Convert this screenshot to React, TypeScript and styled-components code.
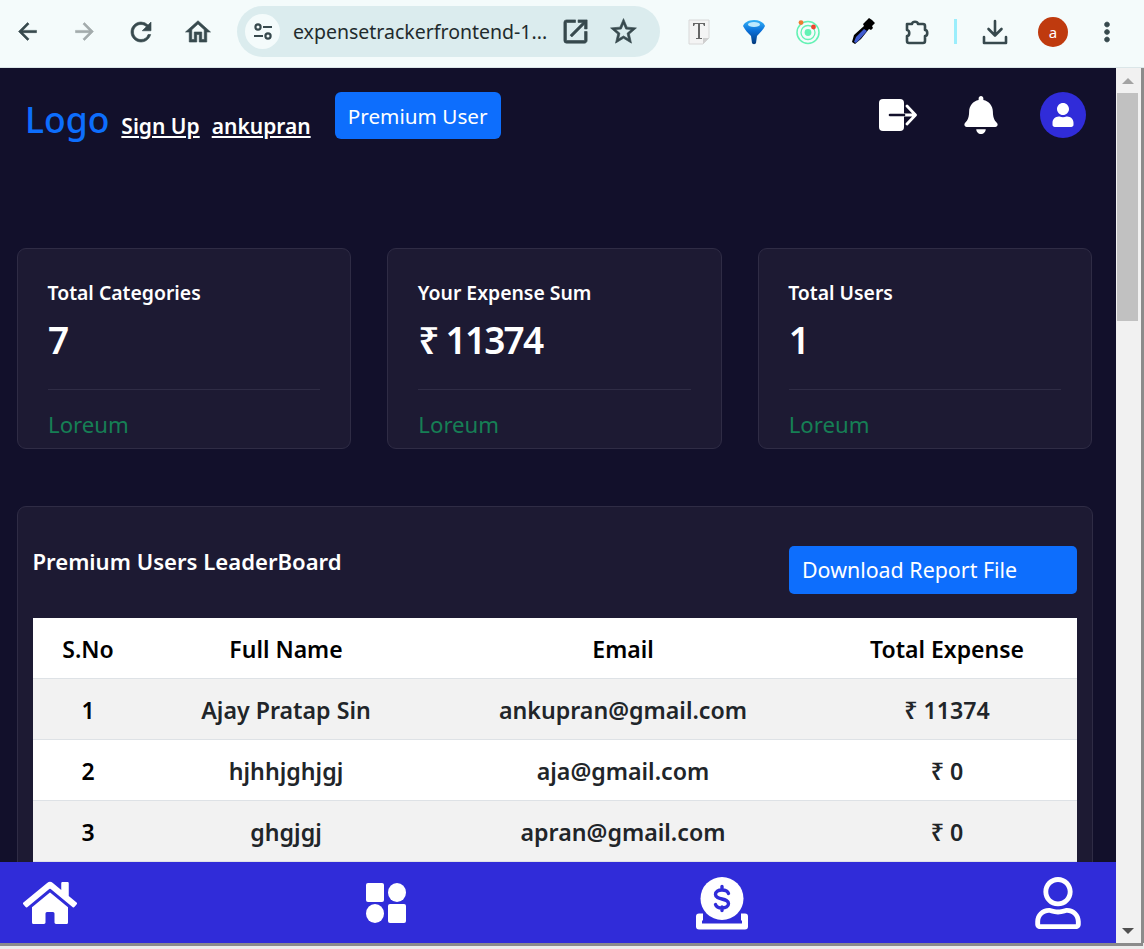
import React from "react";
import styled, { createGlobalStyle } from "styled-components";
import { FaHome, FaBell, FaUser, FaRegUser } from "react-icons/fa";
import { MdArrowBack, MdArrowForward, MdRefresh, MdOutlineHome, MdOpenInNew, MdStarBorder, MdMoreVert } from "react-icons/md";

const Global = createGlobalStyle`
  html, body { margin: 0; padding: 0; height: 949px; overflow: hidden; background: #ececec; }
  * { box-sizing: border-box; }
  body { font-family: "Noto Sans", "Open Sans", sans-serif; }
`;

const Shell = styled.div`
  width: 1144px;
  height: 949px;
  display: flex;
  flex-direction: column;
  background: #ececec;
`;
const Toolbar = styled.header`
  height: 68px;
  flex: none;
  display: flex;
  align-items: center;
  padding: 0 0 4px 9px;
  background: #f4fbfb;
  border-bottom: 1px solid #dbe6e8;
`;
const ToolGroup = styled.div<{ $gap: number }>`
  display: flex;
  align-items: center;
  gap: ${(p) => p.$gap}px;
`;
const ToolButton = styled.span<{ $color?: string; $size?: number }>`
  width: 36px;
  height: 36px;
  flex: none;
  display: flex;
  align-items: center;
  justify-content: center;
  color: ${(p) => p.$color ?? "#37494d"};
  font-size: ${(p) => p.$size ?? 29}px;
`;
const GlyphButton = styled(ToolButton)`
  svg path:not([fill="none"]) { stroke-width: 0.5px; }
`;
const Omnibox = styled.div`
  width: 423px;
  height: 51px;
  margin-left: 21px;
  flex: none;
  display: flex;
  align-items: center;
  padding: 0 17px 0 8px;
  border-radius: 26px;
  background: #dbecee;
`;
const TuneBadge = styled.span`
  width: 35px;
  height: 35px;
  flex: none;
  display: flex;
  align-items: center;
  justify-content: center;
  border-radius: 50%;
  background: #f4fbfb;
`;
const Url = styled.span`
  margin-left: 13px;
  width: 255px;
  flex: none;
  font-size: 19.5px;
  color: #1f2b2d;
  white-space: nowrap;
`;
const OmniActions = styled.div`
  margin-left: 9px;
  display: flex;
  align-items: center;
  gap: 12px;
`;
const Extensions = styled(ToolGroup)`
  margin-left: 21px;
`;
const Separator = styled.span`
  width: 3px;
  height: 25px;
  margin: 0 20px 0 19px;
  flex: none;
  background: #9beefc;
`;
const ProfileDot = styled.span`
  width: 30px;
  height: 30px;
  margin: 0 21px 0 25px;
  flex: none;
  display: flex;
  align-items: center;
  justify-content: center;
  border-radius: 50%;
  background: #bf3a0e;
  color: #fff;
  font-size: 15px;
`;

const Viewport = styled.div`
  height: 875px;
  flex: none;
  display: flex;
`;
const Page = styled.main`
  position: relative;
  width: 1116px;
  flex: none;
  overflow: hidden;
  padding: 0 23px 0 17px;
  background: #12102b;
`;
const Scrollbar = styled.div`
  width: 25px;
  flex: none;
  display: flex;
  flex-direction: column;
  align-items: center;
  background: #f1f1f1;
  padding: 0 3px 0 1px;
`;
const ArrowSlot = styled.div`
  height: 25px;
  width: 100%;
  flex: none;
  display: flex;
  align-items: center;
  justify-content: center;
`;
const ArrowUp = styled.span`
  width: 0;
  height: 0;
  border-left: 6px solid transparent;
  border-right: 6px solid transparent;
  border-bottom: 6px solid #a3a3a3;
`;
const ArrowDown = styled.span`
  width: 0;
  height: 0;
  border-left: 6px solid transparent;
  border-right: 6px solid transparent;
  border-top: 6px solid #505050;
`;
const Thumb = styled.div`
  width: 21px;
  height: 228px;
  flex: none;
  background: #c1c1c1;
`;
const ScrollSpace = styled.div`
  flex: 1;
`;
const FrameEdge = styled.div`
  width: 3px;
  flex: none;
  background: #8b8b8b;
`;
const BottomEdge = styled.div`
  height: 3px;
  width: 1143px;
  flex: none;
  background: #8b8b8b;
`;

const Header = styled.div`
  height: 180px;
  margin-left: -17px;
  padding: 24px 7px 0 25px;
  display: flex;
  align-items: flex-start;
`;
const Logo = styled.span`
  margin-top: 4px;
  font-size: 35.5px;
  line-height: 46px;
  font-weight: 500;
  color: #0d6efd;
`;
const HeaderLink = styled.a`
  margin: 14px 0 0 12px;
  font-size: 21px;
  line-height: 40px;
  font-weight: 600;
  color: #fff;
  text-decoration: underline;
`;
const PremiumButton = styled.button`
  height: 47px;
  width: 166px;
  margin-left: 24px;
  padding: 0;
  border: 0;
  border-radius: 6px;
  background: #0d6efd;
  color: #fff;
  font: inherit;
  font-size: 20.7px;
`;
const HeaderIcons = styled.div`
  margin-left: auto;
  display: flex;
  align-items: center;
  gap: 40px;
  height: 46px;
`;
const BellIcon = styled(FaBell)`
  margin-left: 5px;
  color: #fff;
  font-size: 38px;
`;
const Avatar = styled.span`
  width: 46px;
  height: 46px;
  display: flex;
  align-items: center;
  justify-content: center;
  border-radius: 50%;
  background: #302cd9;
  color: #fff;
  font-size: 24px;
`;

const Cards = styled.section`
  display: grid;
  grid-template-columns: repeat(3, 1fr);
  gap: 36px;
  margin-right: 1px;
`;
const Card = styled.article`
  height: 201px;
  padding: 29px 30px 0;
  border: 1px solid #2f2c45;
  border-radius: 9px;
  background: #1d1a33;
`;
const CardTitle = styled.h3`
  margin: 0 0 0 -0.5px;
  font-size: 19.4px;
  line-height: 30px;
  font-weight: 600;
  color: #fff;
`;
const CardValue = styled.div`
  margin-top: 2px;
  height: 62px;
  font-size: 37px;
  line-height: 60px;
  font-weight: 600;
  letter-spacing: -1.8px;
  color: #fff;
`;
const CardRule = styled.hr`
  margin: 17px 0 0;
  border: 0;
  border-top: 1px solid #2f2c45;
`;
const CardFoot = styled.div`
  margin-top: 18px;
  font-size: 22.2px;
  line-height: 34px;
  color: #167f55;
`;

const Panel = styled.section`
  margin-top: 57px;
  padding: 39px 15px 30px;
  border: 1px solid #2f2c45;
  border-radius: 9px;
  background: #1d1a33;
`;
const PanelHead = styled.div`
  display: flex;
  justify-content: space-between;
  align-items: flex-start;
  margin-bottom: 24px;
`;
const PanelTitle = styled.h2`
  margin: 0 0 0 -0.5px;
  font-size: 22.1px;
  line-height: 30px;
  font-weight: 600;
  color: #fff;
`;
const DownloadButton = styled.button`
  width: 288px;
  height: 48px;
  padding: 0 13px 2px;
  border: 0;
  border-radius: 5px;
  background: #0d6efd;
  color: #fff;
  font: inherit;
  font-size: 21.4px;
  text-align: left;
`;
const Table = styled.table`
  width: 1044px;
  table-layout: fixed;
  border-collapse: collapse;
  background: #fff;
`;
const Col = styled.col<{ $w: number }>`
  width: ${(p) => p.$w}px;
`;
const Row = styled.tr<{ $striped?: boolean; $head?: boolean }>`
  height: ${(p) => (p.$head ? 60 : 61)}px;
  background: ${(p) => (p.$striped ? "#f2f2f2" : "#fff")};
  border-bottom: 1px solid #dee2e6;
`;
const Th = styled.th`
  font-size: 23px;
  font-weight: 600;
  color: #000;
  text-align: center;
  padding: 2px 0 0;
`;
const Td = styled.td`
  font-size: 23.2px;
  font-weight: 600;
  color: #212529;
  text-align: center;
  padding: 2px 0 0;
`;

const BottomNav = styled.nav`
  position: absolute;
  left: 0;
  right: 0;
  bottom: 0;
  height: 81px;
  padding: 0 31px 0 23px;
  display: flex;
  justify-content: space-between;
  align-items: center;
  background: #302cd9;
  color: #fff;
`;
const NavItem = styled.a`
  width: 54px;
  height: 54px;
  display: flex;
  align-items: center;
  justify-content: center;
  color: #fff;
`;

const rows = [
  ["1", "Ajay Pratap Sin", "ankupran@gmail.com", "₹ 11374"],
  ["2", "hjhhjghjgj", "aja@gmail.com", "₹ 0"],
  ["3", "ghgjgj", "apran@gmail.com", "₹ 0"],
];
const cards = [
  ["Total Categories", "7"],
  ["Your Expense Sum", "₹ 11374"],
  ["Total Users", "1"],
];

const TuneIcon = () => (
  <svg width="22" height="22" viewBox="0 0 22 22" fill="none" stroke="#37494d" strokeWidth="2.2">
    <circle cx="6" cy="6" r="2.6" />
    <path d="M11 6h9M2 15h9" />
    <circle cx="16" cy="15" r="2.6" />
  </svg>
);
const TextFileIcon = () => (
  <svg width="22" height="26" viewBox="0 0 22 26">
    <path d="M1 1h20v18l-6 6H1z" fill="#f4f4f4" stroke="#d8d8d8" />
    <path d="M15 25v-6h6z" fill="#cfcfcf" />
    <path d="M5 4h12v3h-1l-1-2h-3v14h2v1H8v-1h2V5H7L6 7H5z" fill="#666" />
  </svg>
);
const FunnelIcon = () => (
  <svg width="24" height="26" viewBox="0 0 24 26">
    <defs>
      <linearGradient id="fn" x1="0" y1="0" x2="0" y2="1">
        <stop offset="0" stopColor="#35b4f8" />
        <stop offset="0.45" stopColor="#0a6fd8" />
        <stop offset="1" stopColor="#033a7c" />
      </linearGradient>
    </defs>
    <path d="M1 7c1-3 5-6 11-6s10 3 11 6c-2 4-5 7-8 10l-1 7c-.5 1.500-3.500 1.500-4 0l-1-7C6 14 3 11 1 7z" fill="url(#fn)" />
    <ellipse cx="12" cy="5.500" rx="6" ry="2.500" fill="#bdeafe" />
  </svg>
);
const OrbitIcon = () => (
  <svg width="26" height="26" viewBox="0 0 26 26" fill="none">
    <circle cx="13" cy="13.5" r="11" stroke="#63f2b4" strokeWidth="1.5" />
    <circle cx="13" cy="13.5" r="7" stroke="#63f2b4" strokeWidth="1.3" />
    <circle cx="13" cy="13.5" r="3.4" fill="#63f2b4" />
    <circle cx="6" cy="3.6" r="2.4" fill="#f07a30" />
    <circle cx="18.5" cy="8" r="2.4" fill="#ee4530" />
  </svg>
);
const DropperIcon = () => (
  <svg width="26" height="28" viewBox="0 0 26 28">
    <path d="M16 3l3-3 3 2 3 3-3 3 1 2-2 2-2-1-8 10-6 5-3-2 2-7 10-9-1-2z" fill="#000" />
    <path d="M14 11l3 2-8 9-3 3-2-1 2-5z" fill="#3f5bd0" />
  </svg>
);
const PuzzleIcon = () => (
  <svg width="26" height="26" viewBox="0 0 26 26" fill="none" stroke="#37494d" strokeWidth="2.6" strokeLinejoin="round">
    <path d="M3 5h5c0-3 6-3 6 0h5a2 2 0 0 1 2 2v4c3 0 3 6 0 6v5a2 2 0 0 1-2 2H5a2 2 0 0 1-2-2v-5c3 0 3-6 0-6z" />
  </svg>
);
const DownloadIcon = () => (
  <svg width="26" height="26" viewBox="0 0 26 26" fill="none" stroke="#37494d" strokeWidth="2.6" strokeLinecap="round" strokeLinejoin="round">
    <path d="M13 2v14M6.500 10l6.500 6.500L19.500 10M2 18v6h22v-6" />
  </svg>
);
const LogoutIcon = () => (
  <svg width="38" height="32" viewBox="0 0 38 32">
    <rect x="0" y="0" width="25" height="32" rx="4" fill="#fff" />
    <path d="M11 16h25M28 7l8.500 9-8.500 9" fill="none" stroke="#fff" strokeWidth="2.8" strokeLinecap="round" strokeLinejoin="round" />
    <path d="M11 16h14" stroke="#12102b" strokeWidth="2.600" strokeLinecap="round" />
  </svg>
);
const TilesIcon = () => (
  <svg width="40" height="40" viewBox="0 0 40 40" fill="#fff">
    <rect x="0" y="0" width="18" height="19" rx="2" />
    <ellipse cx="31" cy="9.5" rx="9" ry="9.5" />
    <ellipse cx="9" cy="30.5" rx="9" ry="9.5" />
    <rect x="22" y="21" width="18" height="19" rx="2" />
  </svg>
);
const CoinIcon = () => (
  <svg width="54" height="54" viewBox="0 0 54 54">
    <rect x="1" y="37.5" width="52" height="16" rx="3" fill="#fff" />
    <path d="M8 37v7.500H7v3h40v-3h-1V37z" fill="#302cd9" />
    <circle cx="27" cy="22.500" r="21.500" fill="#fff" />
    <path d="M33.500 17.500c-.8-2.500-3.200-3.500-6.500-3.500-3.800 0-6.500 1.700-6.500 4.500 0 6 13 3 13 9 0 2.800-2.700 4.500-6.500 4.500-3.300 0-5.700-1-6.500-3.500M27 10.500V14M27 31v3.500" fill="none" stroke="#302cd9" strokeWidth="3.4" strokeLinecap="round" />
  </svg>
);

export default function App() {
  return (
    <Shell>
      <Global />
      <Toolbar>
        <ToolGroup $gap={21}>
          <GlyphButton $size={27}><MdArrowBack /></GlyphButton>
          <GlyphButton $color="#a3abac" $size={27}><MdArrowForward /></GlyphButton>
          <GlyphButton $size={30}><MdRefresh /></GlyphButton>
          <GlyphButton $size={30}><MdOutlineHome /></GlyphButton>
        </ToolGroup>
        <Omnibox>
          <TuneBadge><TuneIcon /></TuneBadge>
          <Url>expensetrackerfrontend-1...</Url>
          <OmniActions>
            <GlyphButton $size={31}><MdOpenInNew /></GlyphButton>
            <GlyphButton $size={31}><MdStarBorder /></GlyphButton>
          </OmniActions>
        </Omnibox>
        <Extensions $gap={18.5}>
          <ToolButton><TextFileIcon /></ToolButton>
          <ToolButton><FunnelIcon /></ToolButton>
          <ToolButton><OrbitIcon /></ToolButton>
          <ToolButton><DropperIcon /></ToolButton>
          <ToolButton><PuzzleIcon /></ToolButton>
        </Extensions>
        <Separator />
        <ToolButton><DownloadIcon /></ToolButton>
        <ProfileDot>a</ProfileDot>
        <GlyphButton $size={30}><MdMoreVert /></GlyphButton>
      </Toolbar>
      <Viewport>
        <Page>
          <Header>
            <Logo>Logo</Logo>
            <HeaderLink>Sign Up</HeaderLink>
            <HeaderLink>ankupran</HeaderLink>
            <PremiumButton>Premium User</PremiumButton>
            <HeaderIcons>
              <LogoutIcon />
              <BellIcon />
              <Avatar><FaUser /></Avatar>
            </HeaderIcons>
          </Header>
          <Cards>
            {cards.map(([title, value]) => (
              <Card key={title}>
                <CardTitle>{title}</CardTitle>
                <CardValue>{value}</CardValue>
                <CardRule />
                <CardFoot>Loreum</CardFoot>
              </Card>
            ))}
          </Cards>
          <Panel>
            <PanelHead>
              <PanelTitle>Premium Users LeaderBoard</PanelTitle>
              <DownloadButton>Download Report File</DownloadButton>
            </PanelHead>
            <Table>
              <colgroup>
                <Col $w={110} />
                <Col $w={286} />
                <Col $w={388} />
                <Col $w={260} />
              </colgroup>
              <thead>
                <Row $head>
                  <Th>S.No</Th>
                  <Th>Full Name</Th>
                  <Th>Email</Th>
                  <Th>Total Expense</Th>
                </Row>
              </thead>
              <tbody>
                {rows.map((r, i) => (
                  <Row key={r[0]} $striped={i % 2 === 0}>
                    <Th scope="row">{r[0]}</Th>
                    <Td>{r[1]}</Td>
                    <Td>{r[2]}</Td>
                    <Td>{r[3]}</Td>
                  </Row>
                ))}
              </tbody>
            </Table>
          </Panel>
          <BottomNav>
            <NavItem><FaHome size={54} /></NavItem>
            <NavItem><TilesIcon /></NavItem>
            <NavItem><CoinIcon /></NavItem>
            <NavItem><FaRegUser size={52} /></NavItem>
          </BottomNav>
        </Page>
        <Scrollbar>
          <ArrowSlot><ArrowUp /></ArrowSlot>
          <Thumb />
          <ScrollSpace />
          <ArrowSlot><ArrowDown /></ArrowSlot>
        </Scrollbar>
        <FrameEdge />
      </Viewport>
      <BottomEdge />
    </Shell>
  );
}
